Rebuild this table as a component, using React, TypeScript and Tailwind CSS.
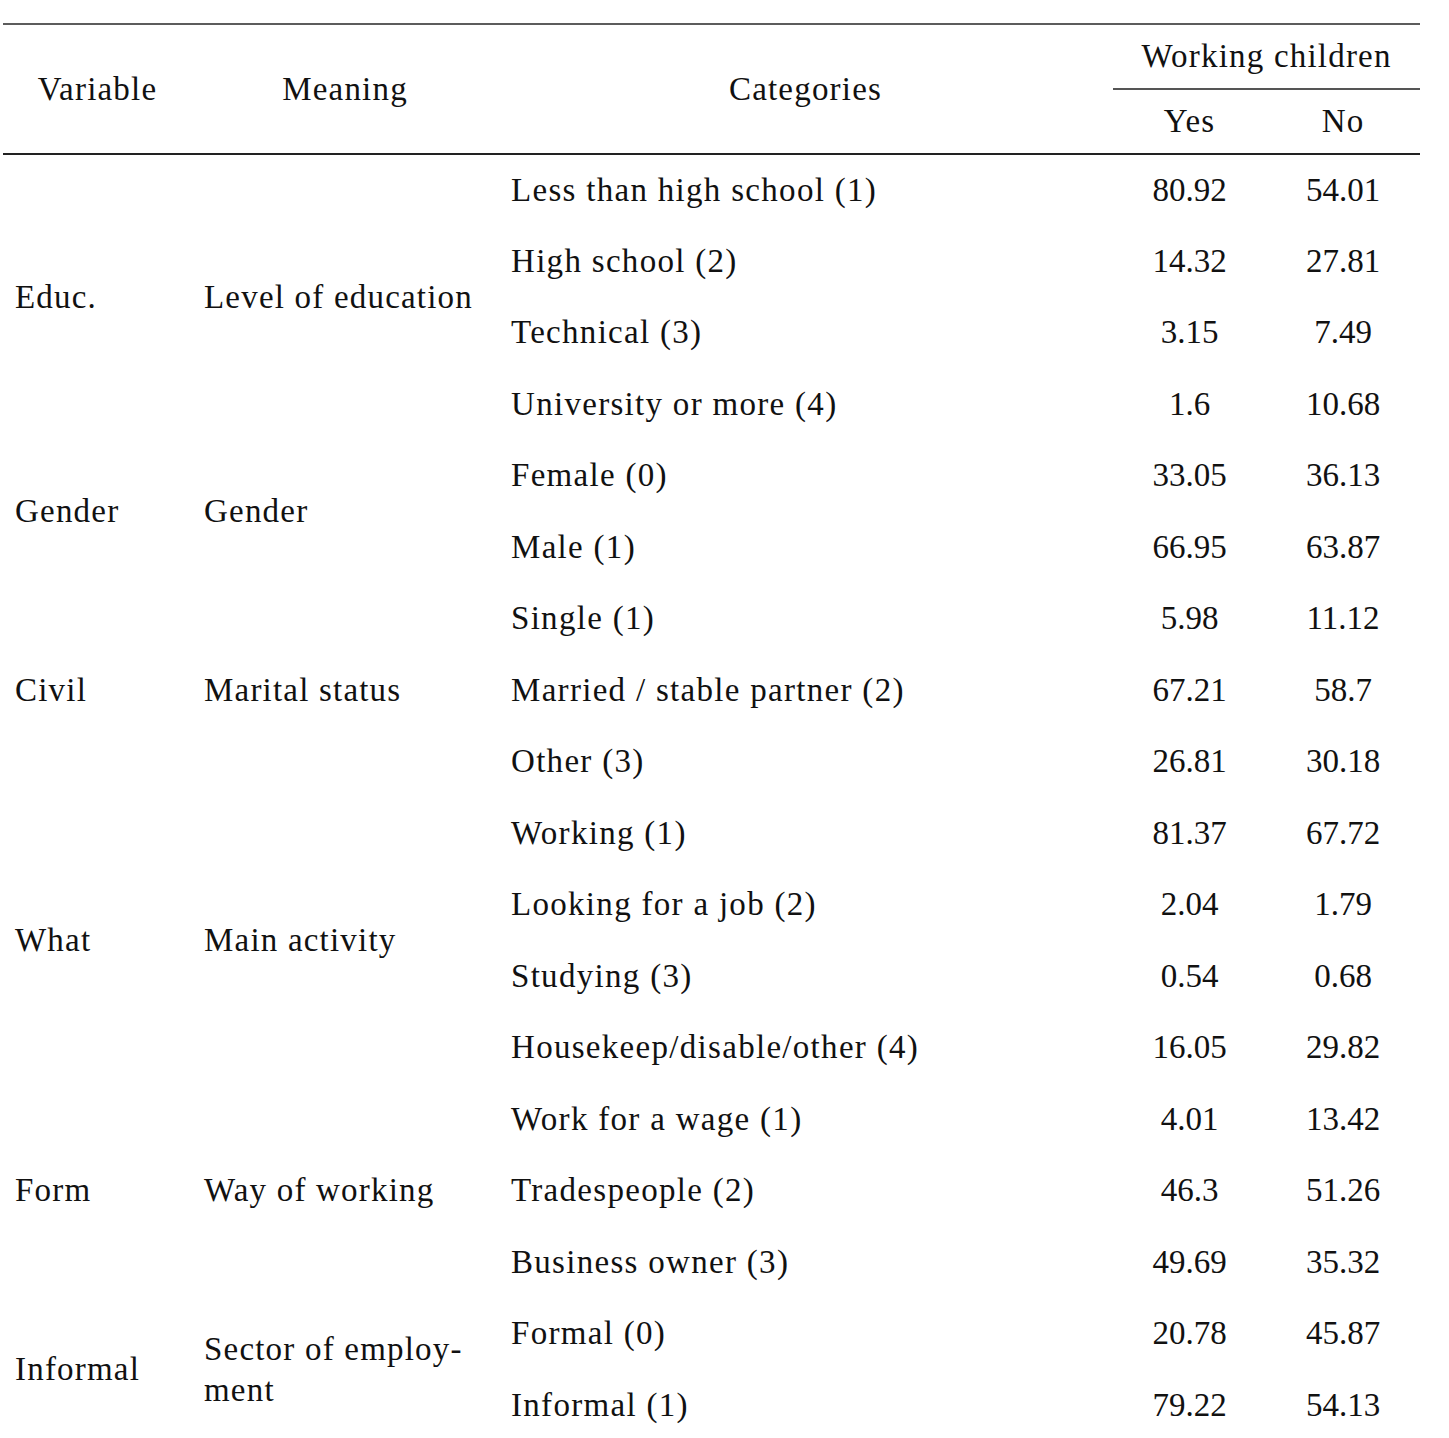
import { Fragment } from "react";

type Group = {
  variable: string;
  meaning: React.ReactNode;
  rows: [string, string, string][];
};

const groups: Group[] = [
  {
    variable: "Educ.",
    meaning: "Level of education",
    rows: [
      ["Less than high school (1)", "80.92", "54.01"],
      ["High school (2)", "14.32", "27.81"],
      ["Technical (3)", "3.15", "7.49"],
      ["University or more (4)", "1.6", "10.68"],
    ],
  },
  {
    variable: "Gender",
    meaning: "Gender",
    rows: [
      ["Female (0)", "33.05", "36.13"],
      ["Male (1)", "66.95", "63.87"],
    ],
  },
  {
    variable: "Civil",
    meaning: "Marital status",
    rows: [
      ["Single (1)", "5.98", "11.12"],
      ["Married / stable partner (2)", "67.21", "58.7"],
      ["Other (3)", "26.81", "30.18"],
    ],
  },
  {
    variable: "What",
    meaning: "Main activity",
    rows: [
      ["Working (1)", "81.37", "67.72"],
      ["Looking for a job (2)", "2.04", "1.79"],
      ["Studying (3)", "0.54", "0.68"],
      ["Housekeep/disable/other (4)", "16.05", "29.82"],
    ],
  },
  {
    variable: "Form",
    meaning: "Way of working",
    rows: [
      ["Work for a wage (1)", "4.01", "13.42"],
      ["Tradespeople (2)", "46.3", "51.26"],
      ["Business owner (3)", "49.69", "35.32"],
    ],
  },
  {
    variable: "Informal",
    meaning: (
      <>
        Sector of employ-
        <br />
        ment
      </>
    ),
    rows: [
      ["Formal (0)", "20.78", "45.87"],
      ["Informal (1)", "79.22", "54.13"],
    ],
  },
];

export default function App() {
  return (
    <div
      className="w-[1449px] h-[1438px] overflow-hidden bg-white pt-[23px] pl-[3px] text-[#111]"
      style={{ fontFamily: '"Liberation Serif", "Times New Roman", serif' }}
    >
      <table className="w-[1417px] table-fixed border-collapse text-[33px] leading-none">
        <colgroup>
          <col className="w-[189px]" />
          <col className="w-[306px]" />
          <col className="w-[615px]" />
          <col className="w-[153px]" />
          <col className="w-[154px]" />
        </colgroup>
        <thead className="tracking-[1.2px]">
          <tr className="h-[65px] border-t-2 border-[#5c5c5c]">
            <th rowSpan={2} className="font-normal text-center align-middle">
              Variable
            </th>
            <th rowSpan={2} className="font-normal text-center align-middle">
              Meaning
            </th>
            <th rowSpan={2} className="font-normal text-center align-middle">
              Categories
            </th>
            <th
              colSpan={2}
              className="font-normal text-center align-middle border-b-2 border-[#555]"
            >
              Working children
            </th>
          </tr>
          <tr className="h-[65px] border-b-2 border-[#222]">
            <th className="font-normal text-center align-middle">Yes</th>
            <th className="font-normal text-center align-middle">No</th>
          </tr>
        </thead>
        <tbody>
          {groups.map((g) => (
            <Fragment key={g.variable}>
              {g.rows.map((r, i) => (
                <tr key={r[0]} className="h-[71.5px]">
                  {i === 0 && (
                    <>
                      <td
                        rowSpan={g.rows.length}
                        className="pl-3 align-middle tracking-[1.2px]"
                      >
                        {g.variable}
                      </td>
                      <td
                        rowSpan={g.rows.length}
                        className="pl-3 align-middle leading-[41px] tracking-[1.2px]"
                      >
                        {g.meaning}
                      </td>
                    </>
                  )}
                  <td className="pl-[13px] align-middle tracking-[1.3px]">{r[0]}</td>
                  <td className="text-center align-middle">{r[1]}</td>
                  <td className="text-center align-middle">{r[2]}</td>
                </tr>
              ))}
            </Fragment>
          ))}
        </tbody>
      </table>
    </div>
  );
}
